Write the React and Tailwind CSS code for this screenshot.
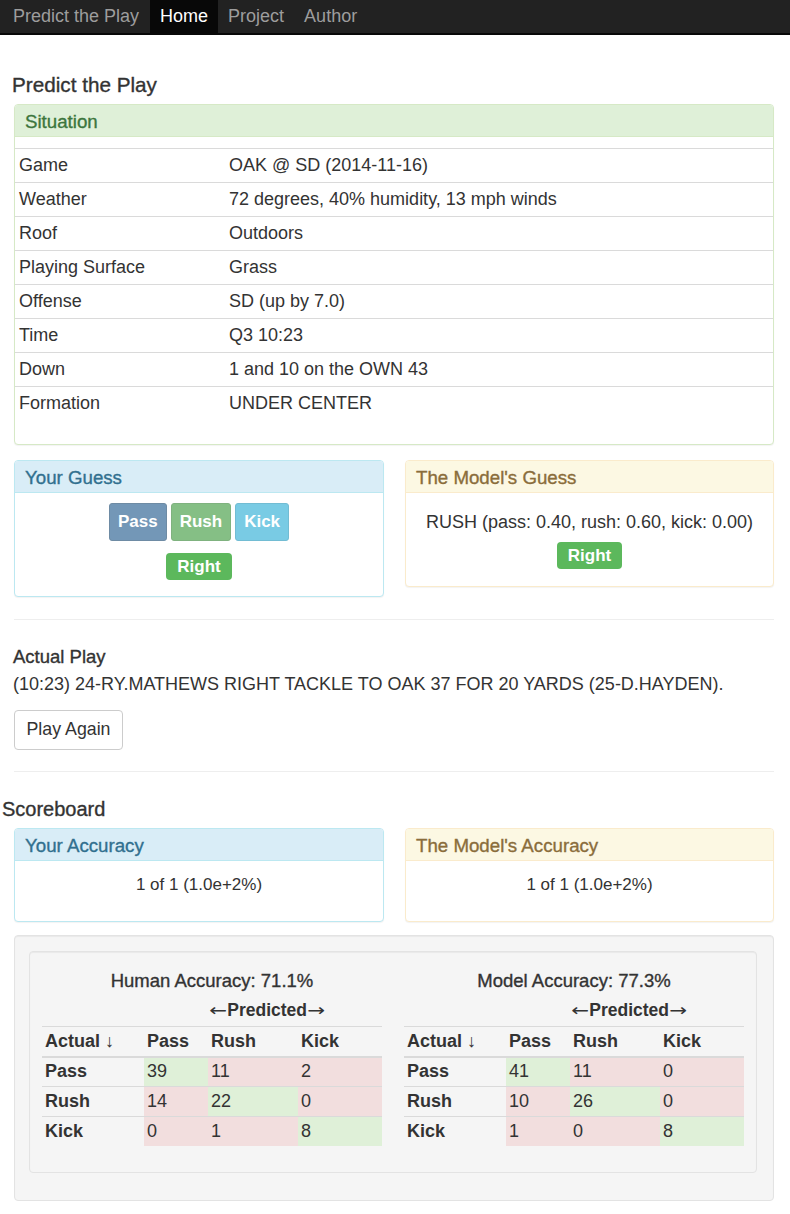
const MED = "[-webkit-text-stroke:0.35px_currentcolor]";

function Panel({ title, tone, children, className = "" }) {
  const tones = {
    success: "border-[#d6e9c6]",
    info: "border-[#bce8f1]",
    warning: "border-[#faebcc]",
  };
  const heads = {
    success: "bg-[#dff0d8] text-[#3c763d] border-[#d6e9c6]",
    info: "bg-[#d9edf7] text-[#31708f] border-[#bce8f1]",
    warning: "bg-[#fcf8e3] text-[#8a6d3b] border-[#faebcc]",
  };
  return (
    <div className={`border rounded-[4px] bg-white shadow-[0_1px_1px_rgba(0,0,0,0.05)] ${tones[tone]} ${className}`}>
      <div className={`h-[32px] pt-[3px] border-b px-[10px] flex items-center text-[18.7px] rounded-t-[3px] ${MED} ${heads[tone]}`}>
        {title}
      </div>
      {children}
    </div>
  );
}

function Label() {
  return (
    <span className="inline-flex items-center justify-center h-[27px] px-[11px] rounded-[4px] bg-[#5cb85c] text-white font-bold text-[17px] leading-none">
      Right
    </span>
  );
}

const situation = [
  ["Game", "OAK @ SD (2014-11-16)"],
  ["Weather", "72 degrees, 40% humidity, 13 mph winds"],
  ["Roof", "Outdoors"],
  ["Playing Surface", "Grass"],
  ["Offense", "SD (up by 7.0)"],
  ["Time", "Q3 10:23"],
  ["Down", "1 and 10 on the OWN 43"],
  ["Formation", "UNDER CENTER"],
];

const G = "bg-[#dff0d8]";
const R = "bg-[#f2dede]";

function Matrix({ title, rows }) {
  const cols = "grid grid-cols-[102px_64px_90px_84px]";
  return (
    <div className="w-[340px] flex flex-col text-[18px]">
      <div className={`mt-[16px] h-[26px] flex items-center justify-center text-[18.5px] ${MED}`}>{title}</div>
      <div className={`${cols} h-[32px] items-center`}>
        <div />
        <div />
        <div className="col-span-2 pl-[3px] font-bold text-[17.5px] whitespace-nowrap flex items-center">
          <span className="font-['DejaVu_Sans'] font-normal text-[17px] scale-x-[1.25] inline-block">←</span>
          <span className="mx-[2px]">Predicted</span>
          <span className="font-['DejaVu_Sans'] font-normal text-[17px] scale-x-[1.25] inline-block">→</span>
        </div>
      </div>
      <div className={`${cols} h-[32px] items-stretch border-t border-[#dadada] border-b-2 font-bold`}>
        <div className="pl-[3px] flex items-center">Actual ↓</div>
        <div className="pl-[3px] flex items-center">Pass</div>
        <div className="pl-[3px] flex items-center">Rush</div>
        <div className="pl-[3px] flex items-center">Kick</div>
      </div>
      {rows.map((r, i) => (
        <div key={r.label} className={`${cols} ${i === 0 ? "h-[28px]" : "h-[30px] border-t border-[#dadada]"}`}>
          <div className="pl-[3px] flex items-center font-bold">{r.label}</div>
          {r.cells.map((c, j) => (
            <div key={j} className={`pl-[3px] flex items-center ${i === j ? G : R}`}>{c}</div>
          ))}
        </div>
      ))}
    </div>
  );
}

export default function App() {
  return (
    <div className="w-[790px] min-h-[1214px] bg-white text-[#333] text-[18px] leading-[1.42857] font-['Liberation_Sans',Arial,Helvetica,sans-serif]">
      <nav className="h-[35px] bg-[#222] border-b-2 border-[#080808] flex items-stretch text-[18px]">
        <div className="pl-[13px] pr-[11px] flex items-center text-[#9d9d9d]">Predict the Play</div>
        <div className="px-[10px] flex items-center bg-[#080808] text-white">Home</div>
        <div className="px-[10px] flex items-center text-[#9d9d9d]">Project</div>
        <div className="px-[10px] flex items-center text-[#9d9d9d]">Author</div>
      </nav>

      <div className="ml-[14px] w-[760px]">
        <h2 className={`mt-[39px] h-[22px] mb-[8px] -ml-[2px] text-[20.7px] leading-[22px] ${MED}`}>Predict the Play</h2>

        <Panel title="Situation" tone="success">
          <div className="pt-[11px] pb-[24px]">
            {situation.map(([k, v]) => (
              <div key={k} className="h-[34px] border-t border-[#dadada] grid grid-cols-[214px_1fr] items-center">
                <div className="pl-[4px]">{k}</div>
                <div>{v}</div>
              </div>
            ))}
          </div>
        </Panel>

        <div className="mt-[15px] grid grid-cols-[370px_369px] gap-x-[21px] items-start">
          <Panel title="Your Guess" tone="info">
            <div className="pt-[10px] pb-[16px] flex flex-col items-center">
              <div className="flex gap-[4px]">
                <span className="h-[38px] px-[8px] flex items-center rounded-[3px] bg-[#7397b7] border border-[#6e8ba4] text-white font-bold text-[17px]">Pass</span>
                <span className="h-[38px] px-[8px] flex items-center rounded-[3px] bg-[#85bf85] border border-[#7fb27f] text-white font-bold text-[17px]">Rush</span>
                <span className="h-[38px] px-[8px] flex items-center rounded-[3px] bg-[#79cbe4] border border-[#72bcd3] text-white font-bold text-[17px]">Kick</span>
              </div>
              <div className="mt-[12px]"><Label /></div>
            </div>
          </Panel>
          <Panel title="The Model's Guess" tone="warning">
            <div className="pt-[18px] pb-[17px] flex flex-col items-center">
              <div className="h-[23px] leading-[23px]">RUSH (pass: 0.40, rush: 0.60, kick: 0.00)</div>
              <div className="mt-[8px]"><Label /></div>
            </div>
          </Panel>
        </div>

        <hr className="mt-[22px] border-0 border-t border-[#eee]" />

        <h4 className={`mt-[26px] h-[22px] leading-[22px] -ml-[1px] text-[18.5px] ${MED}`}>Actual Play</h4>
        <p className="mt-[5px] h-[23px] leading-[23px] -ml-[1px]">(10:23) 24-RY.MATHEWS RIGHT TACKLE TO OAK 37 FOR 20 YARDS (25-D.HAYDEN).</p>
        <button className="mt-[14px] h-[40px] w-[109px] border border-[#ccc] rounded-[4px] bg-white text-[17.8px] text-[#333] flex items-center justify-center">Play Again</button>

        <hr className="mt-[21px] border-0 border-t border-[#eee]" />

        <h3 className={`mt-[26px] h-[22px] leading-[22px] -ml-[12px] text-[20px] ${MED}`}>Scoreboard</h3>

        <div className="mt-[8px] grid grid-cols-[370px_369px] gap-x-[21px] items-start">
          <Panel title="Your Accuracy" tone="info">
            <div className="pt-[12px] h-[60px] text-center leading-[23px] text-[17px]">1 of 1 (1.0e+2%)</div>
          </Panel>
          <Panel title="The Model's Accuracy" tone="warning">
            <div className="pt-[12px] h-[60px] text-center leading-[23px] text-[17px]">1 of 1 (1.0e+2%)</div>
          </Panel>
        </div>

        <div className="mt-[13px] border border-[#e3e3e3] bg-[#f5f5f5] rounded-[4px] pt-[15px] pl-[14px] pr-[16px] pb-[27px] shadow-[inset_0_1px_1px_rgba(0,0,0,0.05)]">
          <div className="border border-[#e3e3e3] bg-[#f5f5f5] rounded-[4px] px-[12px] pb-[26px] flex justify-between shadow-[inset_0_1px_1px_rgba(0,0,0,0.05)]">
            <Matrix
              title="Human Accuracy: 71.1%"
              rows={[
                { label: "Pass", cells: ["39", "11", "2"] },
                { label: "Rush", cells: ["14", "22", "0"] },
                { label: "Kick", cells: ["0", "1", "8"] },
              ]}
            />
            <Matrix
              title="Model Accuracy: 77.3%"
              rows={[
                { label: "Pass", cells: ["41", "11", "0"] },
                { label: "Rush", cells: ["10", "26", "0"] },
                { label: "Kick", cells: ["1", "0", "8"] },
              ]}
            />
          </div>
        </div>
      </div>
    </div>
  );
}
